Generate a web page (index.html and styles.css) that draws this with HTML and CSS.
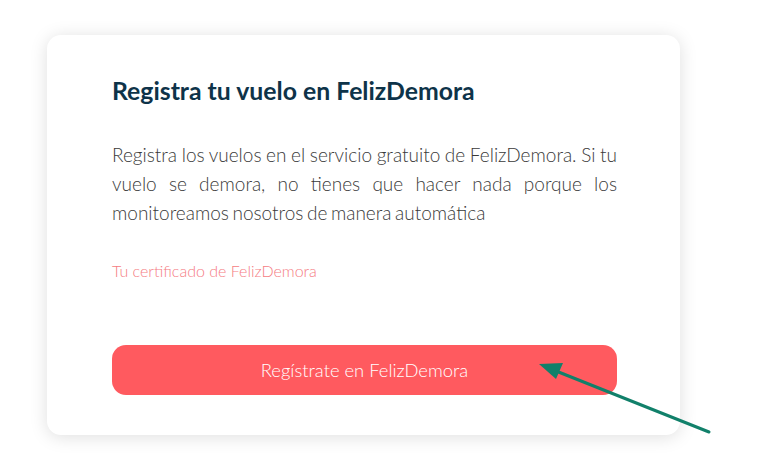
FILE: index.html
```html
<!DOCTYPE html>
<html lang="es">
<head>
  <meta charset="UTF-8" />
  <title>FelizDemora</title>
  <link rel="stylesheet" href="styles.css">
</head>
<body>
  <div class="card">
    <h2 class="card-title">Registra tu vuelo en FelizDemora</h2>
    <p class="card-text">Registra los vuelos en el servicio gratuito de FelizDemora. Si tu vuelo se demora, no tienes que hacer nada porque los monitoreamos nosotros de manera automática</p>
    <a class="cert-link" href="#">Tu certificado de FelizDemora</a>
    <button class="register-btn">Regístrate en FelizDemora</button>
  </div>

  <svg class="arrow" width="773" height="463" viewBox="0 0 773 463">
    <line x1="709" y1="432" x2="556" y2="371" stroke="#11806a" stroke-width="3" stroke-linecap="round" />
    <polygon points="539,364 563,363 556,379" fill="#11806a" />
  </svg>
</body>
</html>
```

FILE: styles.css
```css
body {
  font-family: Lato, "Open Sans", sans-serif;
  margin: 0;
  padding: 35px 0 0 47px;
  background: #fff;
  width: 773px;
  height: 463px;
  box-sizing: border-box;
  overflow: hidden;
}
.card {
  position: relative;
  width: 633px;
  height: 400px;
  box-sizing: border-box;
  padding: 39px 63px 40px 65px;
  background: #fff;
  border-radius: 14px;
  box-shadow: 0 2px 18px rgba(0,0,0,0.13);
  display: flex;
  flex-direction: column;
}
.card-title {
  margin: 0;
  font-size: 24.8px;
  line-height: 34px;
  font-weight: 700;
  color: #0e3349;
}
.card-text {
  margin: 32px 0 0;
  font-size: 19px;
  line-height: 29px;
  font-weight: 300;
  word-spacing: -1.6px;
  color: #3a3a3a;
  text-align: justify;
}
.cert-link {
  margin-top: 33px;
  font-size: 16px;
  line-height: 22px;
  font-weight: 300;
  color: #f57c83;
  text-decoration: none;
}
.register-btn {
  margin-top: auto;
  height: 50px;
  border: none;
  border-radius: 14px;
  background: #ff5a5f;
  color: #fff;
  font-family: inherit;
  font-size: 18.4px;
  font-weight: 300;
  cursor: pointer;
}
.arrow {
  position: absolute;
  left: 0;
  top: 0;
  pointer-events: none;
}
```
